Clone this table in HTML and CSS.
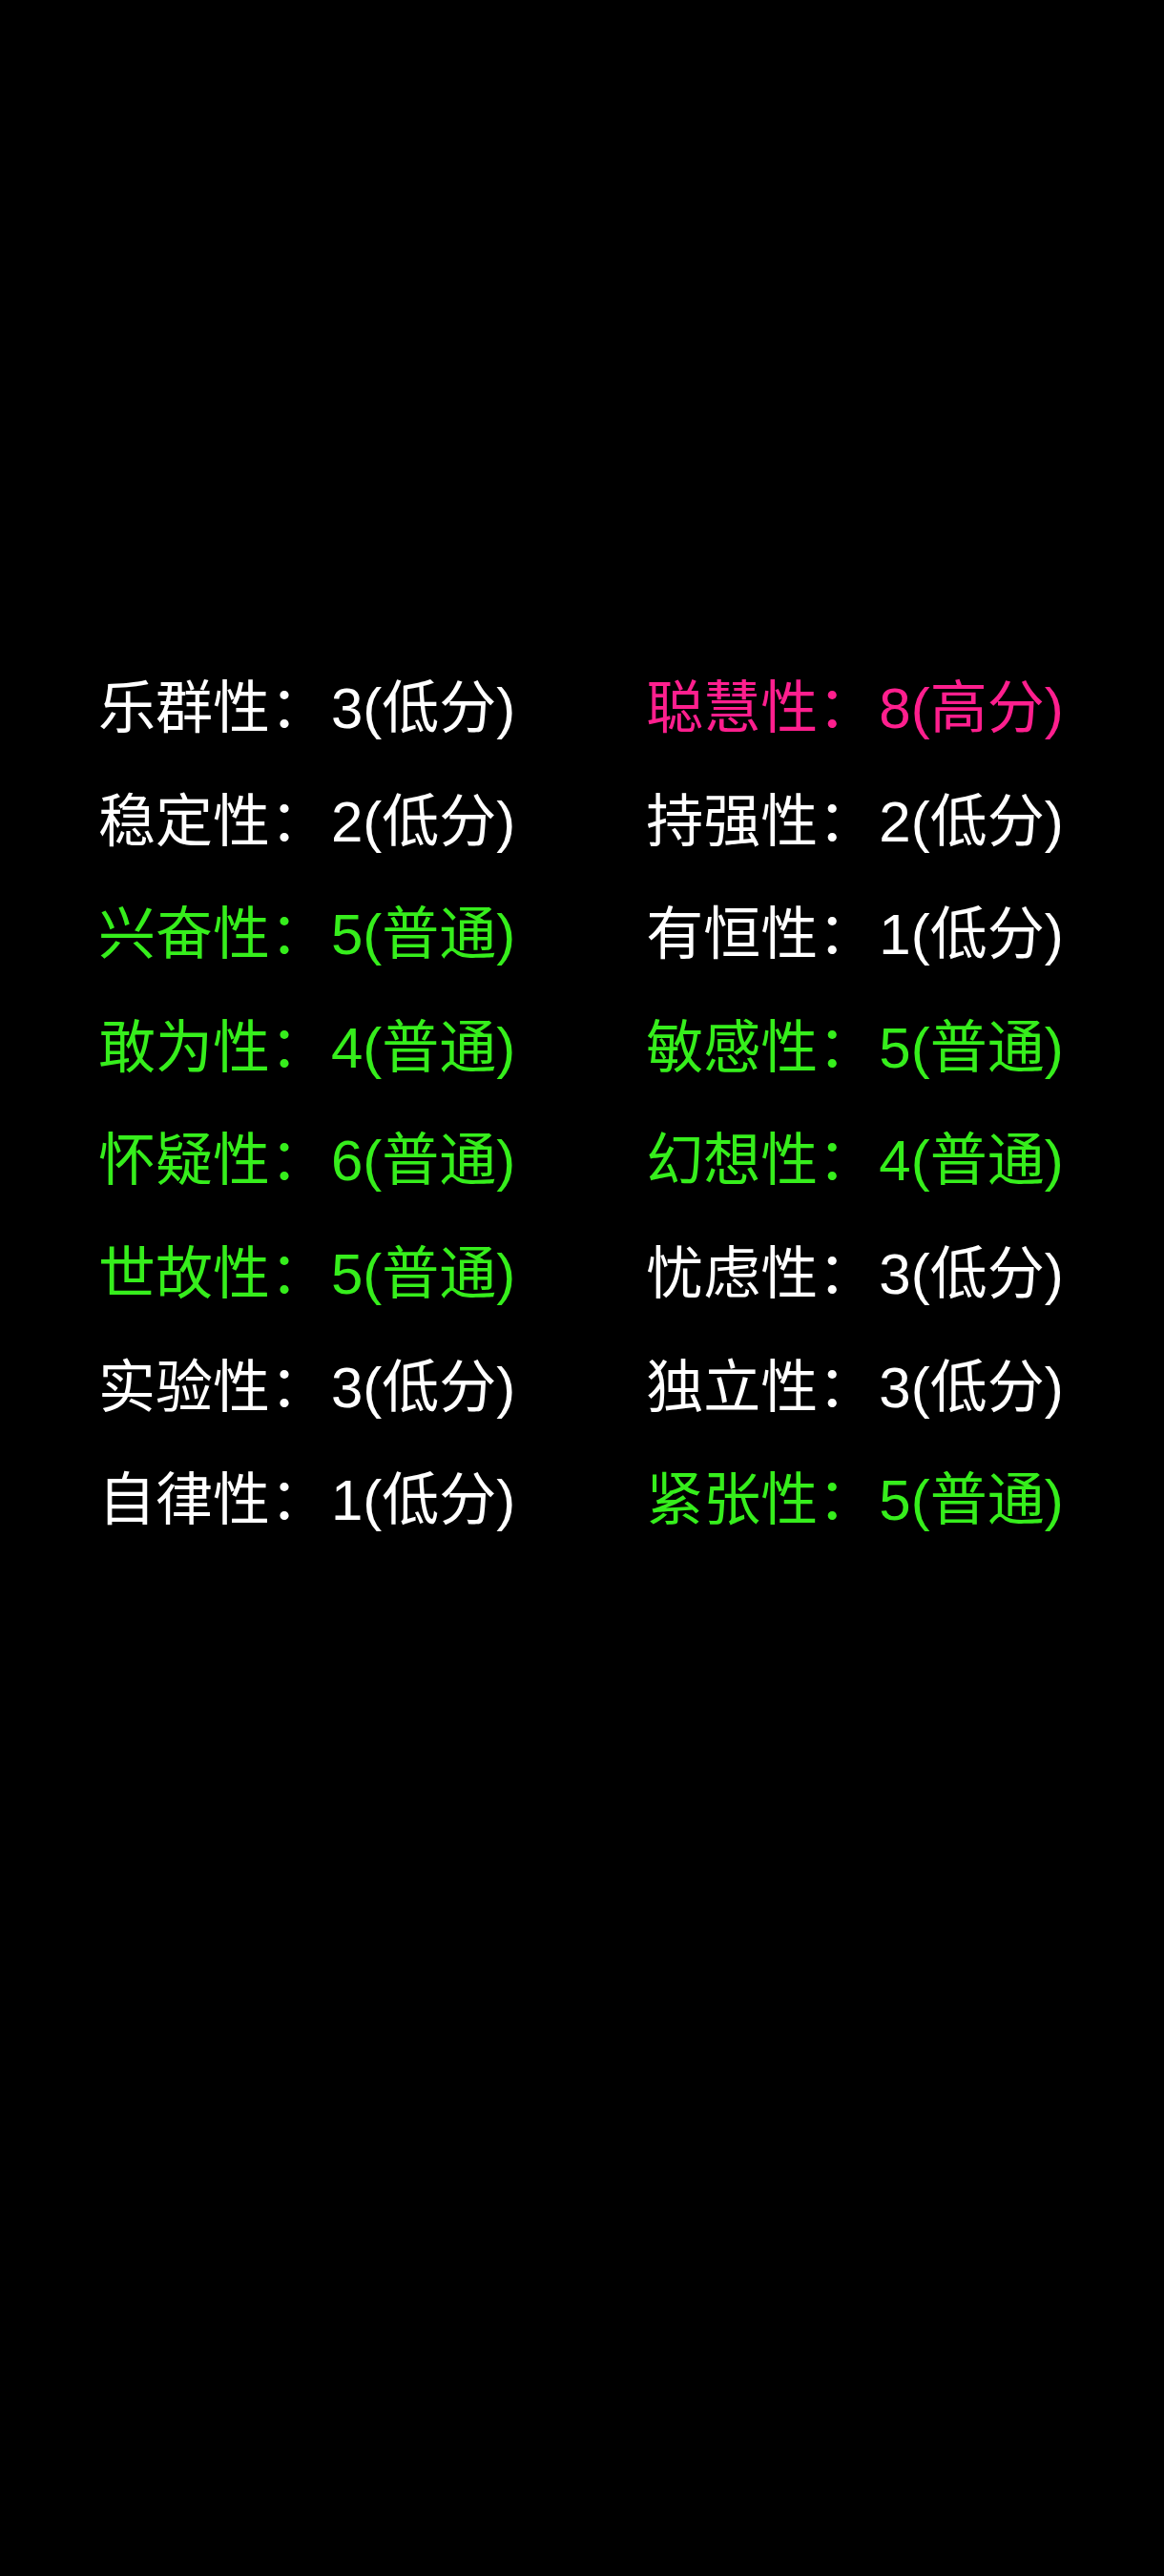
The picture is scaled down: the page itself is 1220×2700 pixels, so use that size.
FILE: index.html
```html
<!DOCTYPE html>
<html lang="zh">
<head>
  <meta charset="UTF-8" />
  <meta name="viewport" content="width=device-width, initial-scale=1.0"/>
  <title>16PF 结果</title>
  <link rel="stylesheet" href="styles.css">
</head>
<body>
  <div class="result-grid">
    <div class="item low">乐群性：<span class="score">3(低分)</span></div>
    <div class="item high">聪慧性：<span class="score">8(高分)</span></div>
    <div class="item low">稳定性：<span class="score">2(低分)</span></div>
    <div class="item low">持强性：<span class="score">2(低分)</span></div>
    <div class="item mid">兴奋性：<span class="score">5(普通)</span></div>
    <div class="item low">有恒性：<span class="score">1(低分)</span></div>
    <div class="item mid">敢为性：<span class="score">4(普通)</span></div>
    <div class="item mid">敏感性：<span class="score">5(普通)</span></div>
    <div class="item mid">怀疑性：<span class="score">6(普通)</span></div>
    <div class="item mid">幻想性：<span class="score">4(普通)</span></div>
    <div class="item mid">世故性：<span class="score">5(普通)</span></div>
    <div class="item low">忧虑性：<span class="score">3(低分)</span></div>
    <div class="item low">实验性：<span class="score">3(低分)</span></div>
    <div class="item low">独立性：<span class="score">3(低分)</span></div>
    <div class="item low">自律性：<span class="score">1(低分)</span></div>
    <div class="item mid">紧张性：<span class="score">5(普通)</span></div>
  </div>
</body>
</html>
```

FILE: styles.css
```css
body {
  margin: 0;
  background-color: #000;
  font-family: 'Liberation Sans', 'Noto Sans CJK SC', sans-serif;
  min-height: 2700px;
}
.result-grid {
  display: grid;
  grid-template-columns: auto auto;
  justify-content: start;
  column-gap: 137px;
  padding: 684px 0 0 103px;
}
.item {
  font-size: 60px;
  line-height: 118.6px;
  white-space: nowrap;
}
.score {
  margin-left: 4px;
}
.low {
  color: #fff;
}
.mid {
  color: #36ee1c;
}
.high {
  color: #ff1f8e;
}
```
